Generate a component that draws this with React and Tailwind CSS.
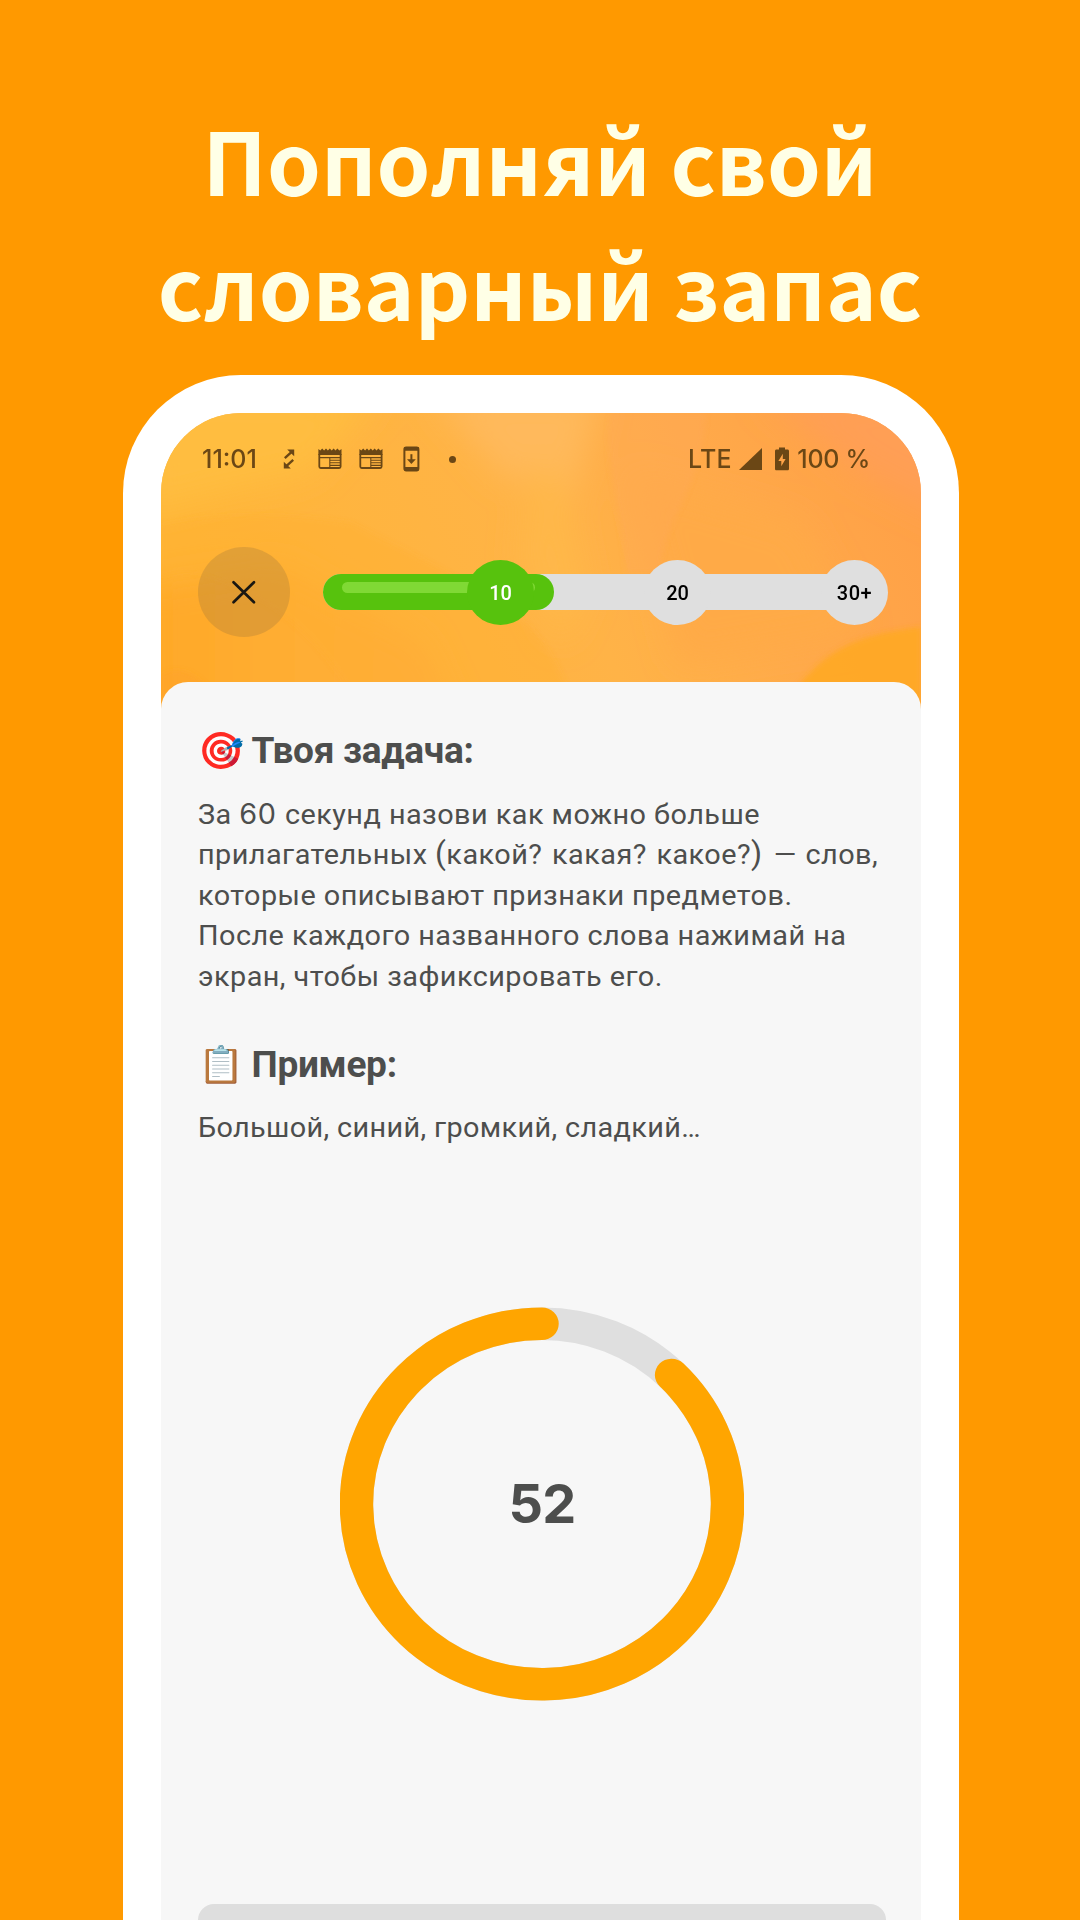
import React from "react";

function SyncIcon() {
  return (
    <svg width="12" height="20" viewBox="0 0 12 20" fill="none" stroke="#6b4715" strokeWidth="2.4">
      <path d="M1.8 9.2 8.4 3.2M10.2 10.8 3.6 16.8" />
      <path d="M4.2.4h7v6.800zM7.800 19.600H.8V12.800z" fill="#6b4715" stroke="none" />
    </svg>
  );
}

function NewsIcon() {
  return (
    <svg width="24" height="22" viewBox="0 0 24 22" fill="#6b4715">
      <path d="M.4 1l1.9 1.6L4.2.6l1.9 2 1.9-2 1.9 2 1.9-2 1.9 2 1.9-2 1.9 2 1.9-2 1.9 2L23.5 1v6H.4z" />
      <path d="M1.3 6v12.6c0 .9.5 1.4 1.4 1.4h18.5c.9 0 1.4-.5 1.4-1.4V6" fill="none" stroke="#6b4715" strokeWidth="1.8" />
      <path d="M2 9.6h9.8v10M12 9.6h10M12 12.2h10M12 14.8h10M12 17.4h10" fill="none" stroke="#6b4715" strokeWidth="1.1" />
    </svg>
  );
}

function PhoneDownloadIcon() {
  return (
    <svg width="17" height="26" viewBox="0 0 17 26" fill="none" stroke="#6b4715">
      <rect x="1.4" y="1.4" width="14" height="23" rx="1.8" strokeWidth="2" />
      <path d="M1 3h15M1 22.8h15" strokeWidth="3.6" />
      <path d="M8.4 8.2v7" strokeWidth="2" />
      <path d="M4 13.2h8.8l-4.4 4.8z" fill="#6b4715" stroke="none" />
    </svg>
  );
}

function BatteryIcon() {
  return (
    <svg width="14" height="24" viewBox="0 0 14 24">
      <path
        fillRule="evenodd"
        fill="#6b4715"
        d="M4 .5h6v2h2.4c1 0 1.6.6 1.6 1.6v17.6c0 1-.6 1.6-1.6 1.6H1.6C.6 23.300 0 22.700 0 21.700V4.100C0 3.100.6 2.500 1.600 2.500H4zM7.800 6.800 3.400 14.100h2.900v5.100l4.300-7.300H7.800z"
      />
    </svg>
  );
}

function HeaderBackdrop() {
  return (
    <svg className="absolute inset-0 h-full w-full" viewBox="0 0 760 300" preserveAspectRatio="none">
      <defs>
        <linearGradient id="base" x1="0" y1="0.2" x2="1" y2="0">
          <stop offset="0" stopColor="#ffb638" />
          <stop offset="0.45" stopColor="#ffb347" />
          <stop offset="0.68" stopColor="#ffaa4a" />
          <stop offset="1" stopColor="#ff9e46" />
        </linearGradient>
        <linearGradient id="low" x1="0" y1="0" x2="1" y2="0">
          <stop offset="0" stopColor="#ffa826" />
          <stop offset="0.5" stopColor="#ffae34" />
          <stop offset="1" stopColor="#ffac40" />
        </linearGradient>
        <filter id="soft" x="-30%" y="-30%" width="160%" height="160%">
          <feGaussianBlur stdDeviation="16" />
        </filter>
        <filter id="edge" x="-30%" y="-30%" width="160%" height="160%">
          <feGaussianBlur stdDeviation="2.500" />
        </filter>
      </defs>
      <rect width="760" height="300" fill="url(#base)" />
      <g filter="url(#soft)">
        <path d="M-20-20H220L150 60 60 80-20 100z" fill="#ffbd40" />
        <path d="M270-20H440L410 90 340 60z" fill="#ffb95c" />
        <path d="M370 50 400 60 425 180 400 230 360 150z" fill="#ffb848" />
        <path d="M-20 170 120 150 260 230 300 320H-20z" fill="url(#low)" />
        <path d="M600-20H800V110L700 60z" fill="#ff9f54" />
        <path d="M470 60 640 110 700 220 520 250z" fill="#ffaa46" />
      </g>
      <g filter="url(#edge)">
        <path d="M0 112C60 98 130 100 190 110 250 140 330 180 370 215 400 250 410 280 410 300H205C170 250 150 215 95 185 60 165 30 150 0 165z" fill="#ffaf32" opacity="0.4" />
        <path d="M450 0C440 40 460 90 465 160L500 160C500 110 540 80 545 0z" fill="#ffa85a" opacity="0.35" />
        <path d="M0 262C20 250 45 262 60 300H0z" fill="#ffa22a" opacity="0.5" />
        <path d="M638 272C665 240 690 222 760 214V300H620z" fill="#ffa824" opacity="0.9" />
      </g>
    </svg>
  );
}

function StatusBar() {
  return (
    <div className="relative flex h-[30px] items-center pl-[41px] pr-[51px] font-[Inter,sans-serif] text-[25px] font-medium leading-[30px] text-[#6b4715]">
      <span className="w-[55px]">11:01</span>
      <span className="ml-[26px] flex"><SyncIcon /></span>
      <span className="ml-[23px] flex"><NewsIcon /></span>
      <span className="ml-[17px] flex"><NewsIcon /></span>
      <span className="ml-[20px] flex"><PhoneDownloadIcon /></span>
      <span className="ml-[28.500px] h-[7px] w-[7px] rounded-full bg-[#6b4715]" />
      <span className="ml-auto tracking-[0.2px]">LTE</span>
      <svg className="ml-[7px]" width="23" height="22" viewBox="0 0 23 22">
        <path d="M0 22 23 0v22z" fill="#6b4715" />
      </svg>
      <span className="ml-[13px] flex"><BatteryIcon /></span>
      <span className="ml-[8.500px] whitespace-nowrap tracking-[-0.300px]">100 %</span>
    </div>
  );
}

function ProgressTrack() {
  return (
    <div className="relative ml-[33px] flex h-[65px] w-[565px] items-center">
      <div className="h-9 w-[540px] rounded-full bg-[#dfdfdf]">
        <div className="h-9 w-[231px] rounded-full bg-[#57c20d] pl-[19px] pt-[7.500px]">
          <div className="h-[11px] w-[193px] rounded-full bg-[#80d935]" />
        </div>
      </div>
      <div className="absolute inset-0 flex items-center justify-between pl-[144px] font-[Roboto,sans-serif] text-[20px] font-medium text-black">
        <span className="flex h-[65px] w-[67px] items-center justify-center rounded-[50%] bg-[#57c20d] pt-px text-white">10</span>
        <span className="flex h-[65px] w-[67px] items-center justify-center rounded-[50%] bg-[#dfdfdf] pt-px">20</span>
        <span className="flex h-[65px] w-[67px] items-center justify-center rounded-[50%] bg-[#dfdfdf] pt-px tracking-[0.600px]">30+</span>
      </div>
    </div>
  );
}

function SectionTitle({ emoji, children }) {
  return (
    <h2 className="flex h-[44px] origin-left scale-x-[1.029] items-baseline whitespace-nowrap text-[36px] font-bold leading-[44px] tracking-[-0.300px]">
      <span className="w-[52px]">{emoji}</span>
      <span>{children}</span>
    </h2>
  );
}

function CountdownRing() {
  return (
    <div className="relative ml-[142.500px] mt-[158px] flex h-[394px] w-[404px] items-center justify-center">
      <svg className="absolute inset-0" width="404" height="394" viewBox="0 0 392.600 394" preserveAspectRatio="none" fill="none">
        <circle cx="196.300" cy="197" r="180.300" stroke="#dfdfdf" strokeWidth="32.500" />
        <circle
          cx="196.300"
          cy="197"
          r="180.300"
          stroke="#ffa500"
          strokeWidth="32.500"
          strokeLinecap="round"
          pathLength="360"
          strokeDasharray="315.700 360"
          transform="rotate(-45.700 196.300 197)"
        />
      </svg>
      <span className="relative font-[Inter,sans-serif] text-[54px] font-bold leading-none tracking-[-0.800px]">52</span>
    </div>
  );
}

export default function App() {
  return (
    <main className="flex h-[1920px] w-[1080px] flex-col overflow-hidden bg-[#ff9900]">
      <h1 className="mt-[96px] text-center font-['Noto_Sans_CJK_SC',sans-serif] text-[86.200px] font-bold leading-[125px] text-[#ffffe6]">
        <span className="block">Пополняй свой</span>
        <span className="block">словарный запас</span>
      </h1>

      <section className="ml-[123px] mt-[29px] flex h-[1545px] w-[836px] flex-col rounded-t-[118px] bg-white px-[38px] pt-[38px]">
        <div className="relative flex grow flex-col overflow-hidden rounded-t-[80px] bg-[#f7f7f7]">
          <header className="relative h-[300px] shrink-0 pt-[31px]">
            <HeaderBackdrop />
            <StatusBar />
            <div className="relative mt-[73px] flex items-center pl-[37px]">
              <button className="flex h-[90px] w-[92px] items-center justify-center rounded-[50%] bg-[#8a6a3a]/25">
                <svg width="26" height="26" viewBox="0 0 26 26" stroke="#1a1712" strokeWidth="2.700" strokeLinecap="round">
                  <path d="M2.500 3.300l20.500 20M23 3.300 2.500 23.300" />
                </svg>
              </button>
              <ProgressTrack />
            </div>
          </header>

          <div className="relative -mt-[31px] grow rounded-t-[27px] bg-[#f7f7f7] px-[36.500px] pt-[47px] font-[Roboto,'Noto_Color_Emoji',sans-serif] text-[#4d4e4d]">
            <SectionTitle emoji="🎯">Твоя задача:</SectionTitle>
            <p className="mt-[20.500px] origin-left scale-x-[1.029] whitespace-nowrap text-[28px] leading-[40.500px] tracking-[0.45px]">
              <span className="block">За <span className="mr-[1px] font-[Inter,sans-serif]">60</span> секунд назови как можно больше</span>
              <span className="block">
                прилагательных <span className="text-[31px] leading-none">(</span>какой?{" "}
                <span className="ml-[2px]">какая?</span> <span className="ml-[2px]">какое?</span>
                <span className="text-[31px] leading-none">)</span>{" "}
                <span className="ml-[3.500px]">—</span> <span className="ml-[1px]">слов,</span>
              </span>
              <span className="block">которые описывают признаки предметов.</span>
              <span className="block">После каждого названного слова нажимай на</span>
              <span className="block">экран, чтобы зафиксировать его.</span>
            </p>
            <div className="mt-[46px]">
              <SectionTitle emoji="📋">Пример:</SectionTitle>
            </div>
            <p className="mt-[21px] origin-left scale-x-[1.029] whitespace-nowrap text-[28px] leading-[40.500px] tracking-[0.35px]">
              Большой, синий, громкий, сладкий…
            </p>
            <CountdownRing />
            <div className="mt-[203.500px] h-[60px] w-[688px] rounded-[16px] bg-[#dedede]" />
          </div>
        </div>
      </section>
    </main>
  );
}
